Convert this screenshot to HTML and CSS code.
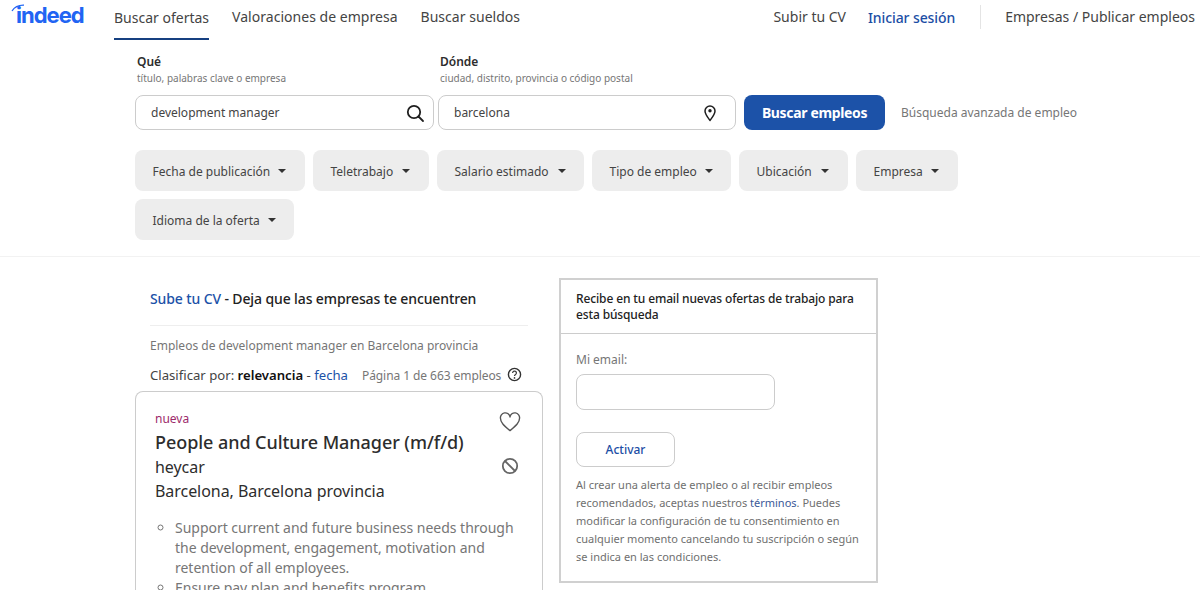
FILE: index.html
```html
<!DOCTYPE html>
<html lang="es">
<head>
<meta charset="utf-8">
<title>Empleos de development manager en Barcelona provincia</title>
<link rel="stylesheet" href="styles.css">
</head>
<body>
<header class="topbar">
  <a class="logo"><svg class="logo-arc" viewBox="0 0 14 8" width="14" height="8"><path d="M1 7C3.500 3 7.500 1 13 1.200" fill="none" stroke="#2164f3" stroke-width="1.300"/></svg><span>indeed</span></a>
  <nav class="main-nav">
    <a class="nav-item nav-active">Buscar ofertas</a>
    <a class="nav-item">Valoraciones de empresa</a>
    <a class="nav-item">Buscar sueldos</a>
  </nav>
  <nav class="user-nav">
    <a class="nav-item">Subir tu CV</a>
    <a class="nav-item nav-signin">Iniciar sesión</a>
    <span class="nav-divider"></span>
    <a class="nav-item">Empresas / Publicar empleos</a>
  </nav>
</header>

<section class="search">
  <form class="search-form">
    <div class="field field-what">
      <div class="field-label">Qué</div>
      <div class="field-hint">título, palabras clave o empresa</div>
      <div class="input-box"><span>development manager</span>
        <svg viewBox="0 0 20 20" width="20" height="20"><circle cx="9" cy="9" r="6.200" fill="none" stroke="#1f1f1f" stroke-width="1.800"/><path d="M13.500 13.500L18 18" stroke="#1f1f1f" stroke-width="1.800" stroke-linecap="round"/></svg>
      </div>
    </div>
    <div class="field field-where">
      <div class="field-label">Dónde</div>
      <div class="field-hint">ciudad, distrito, provincia o código postal</div>
      <div class="input-box"><span>barcelona</span>
        <svg class="pin" viewBox="0 0 14 18" width="14" height="18"><path d="M7 16.500C4 12.500 2 10 2 7a5 5 0 0 1 10 0c0 3-2 5.500-5 9.500z" fill="none" stroke="#1f1f1f" stroke-width="1.500" stroke-linejoin="round"/><circle cx="7" cy="6.800" r="1.700" fill="#1f1f1f"/></svg>
      </div>
    </div>
    <a class="search-btn">Buscar empleos</a>
    <a class="advanced">Búsqueda avanzada de empleo</a>
  </form>
  <div class="filters">
    <a class="chip chip-date">Fecha de publicación<i class="caret"></i></a>
    <a class="chip chip-remote">Teletrabajo<i class="caret"></i></a>
    <a class="chip chip-salary">Salario estimado<i class="caret"></i></a>
    <a class="chip chip-type">Tipo de empleo<i class="caret"></i></a>
    <a class="chip chip-loc">Ubicación<i class="caret"></i></a>
    <a class="chip chip-company">Empresa<i class="caret"></i></a>
    <a class="chip chip-lang">Idioma de la oferta<i class="caret"></i></a>
  </div>
</section>

<main class="results">
  <div class="results-col">
    <div class="col-inner">
      <div class="upload"><a class="link">Sube tu CV</a> - Deja que las empresas te encuentren</div>
      <h1 class="jobs-title">Empleos de development manager en Barcelona provincia</h1>
      <div class="sort-row">
        <span class="sort">Clasificar por: <b>relevancia</b> - <a class="link">fecha</a></span>
        <span class="count">Página 1 de 663 empleos</span>
        <svg class="help" viewBox="0 0 16 16" width="15" height="15"><circle cx="8" cy="8" r="6.500" fill="none" stroke="#333" stroke-width="1.500"/><path d="M6 6.300a2 2 0 1 1 3.100 1.700C8.300 8.500 8 8.900 8 9.700" fill="none" stroke="#333" stroke-width="1.300"/><circle cx="8" cy="11.600" r=".9" fill="#333"/></svg>
      </div>
    </div>
    <article class="job-card">
      <div class="job-actions">
        <svg viewBox="0 0 24 22" width="22" height="20"><path d="M12 20.500C5 14.500 1.500 11.500 1.500 7A5.300 5.300 0 0 1 12 5.500 5.300 5.300 0 0 1 22.500 7C22.500 11.500 19 14.500 12 20.500z" fill="none" stroke="#555" stroke-width="1.500" stroke-linejoin="round"/></svg>
        <svg viewBox="0 0 18 18" width="18" height="18"><circle cx="9" cy="9" r="7.200" fill="none" stroke="#666" stroke-width="1.800"/><path d="M4 4l10 10" stroke="#666" stroke-width="1.800"/></svg>
      </div>
      <div class="job-new">nueva</div>
      <h2 class="job-title">People and Culture Manager (m/f/d)</h2>
      <div class="job-meta">heycar</div>
      <div class="job-meta">Barcelona, Barcelona provincia</div>
      <ul class="job-desc">
        <li>Support current and future business needs through the development, engagement, motivation and retention of all employees.</li>
        <li>Ensure pay plan and benefits program</li>
      </ul>
    </article>
  </div>
  <aside class="alert-box">
    <div class="alert-head">Recibe en tu email nuevas ofertas de trabajo para esta búsqueda</div>
    <div class="alert-body">
      <div class="alert-label">Mi email:</div>
      <div class="alert-input"></div>
      <a class="alert-btn">Activar</a>
      <p class="alert-legal">Al crear una alerta de empleo o al recibir empleos recomendados, aceptas nuestros <a class="legal-link">términos</a>. Puedes modificar la configuración de tu consentimiento en cualquier momento cancelando tu suscripción o según se indica en las condiciones.</p>
    </div>
  </aside>
</main>
</body>
</html>
```
FILE: styles.css
```css
* { box-sizing: border-box; }
html, body { margin: 0; height: 590px; overflow: hidden; }
body { font-family: "Noto Sans", sans-serif; background: #fff; color: #2d2d2d; font-size: 14px; }
h1, h2, p, ul { margin: 0; padding: 0; font-weight: 400; }

.topbar { display: flex; height: 40px; padding-left: 16px; }
.logo { position: relative; width: 98px; font-family: "Inter", sans-serif; font-weight: 700; font-size: 22px; line-height: 30px; letter-spacing: -1px; color: #2164f3; }
.logo-arc { position: absolute; left: -5px; top: 4px; }
.main-nav { display: flex; gap: 23px; }
.main-nav .nav-item { letter-spacing: .03px; }
.nav-item { display: block; height: 40px; line-height: 34px; color: #444; font-size: 14px; white-space: nowrap; }
.nav-active { border-bottom: 2px solid #164081; line-height: 36px; }
.main-nav .nav-active { letter-spacing: 0; }
.user-nav { display: flex; margin-left: auto; padding-right: 5px; gap: 23px; }
.nav-signin { color: #1c4ea5; font-weight: 500; line-height: 35px; letter-spacing: -.1px; margin: 0 1px 0 -1px; }
.nav-divider { width: 1px; height: 24px; margin: 5px 1px 0; background: #e4e4e4; }

.search { padding: 13px 0 0 135px; height: 217px; border-bottom: 1px solid #f2f2f2; }
.search-form { display: flex; align-items: flex-end; }
.field { display: flex; flex-direction: column; margin-right: 4px; }
.field-what { width: 299px; }
.field-where { width: 298px; margin-right: 8px; }
.field-label { padding-left: 2px; font-size: 12px; font-weight: 600; line-height: 17px; color: #2d2d2d; }
.field-hint { padding-left: 2px; font-size: 10px; line-height: 14px; color: #767676; margin: 1px 0 10px; }
.input-box { display: flex; align-items: center; justify-content: space-between; height: 35px; padding: 0 8px 0 15px; border: 1px solid #ccc; border-radius: 8px; font-size: 12px; color: #444; }
.pin { margin-right: 10px; }
.search-btn { width: 141px; height: 35px; line-height: 35px; text-align: center; border-radius: 8px; background: #1c52a8; color: #fff; font-weight: 700; font-size: 14px; letter-spacing: -.35px; }
.advanced { margin-left: 16px; line-height: 35px; font-size: 12px; color: #767676; }

.filters { display: flex; flex-wrap: wrap; gap: 8px; margin-top: 20px; width: 860px; }
.chip { display: flex; align-items: center; justify-content: space-between; height: 41px; padding: 1px 19px 0 17.5px; background: #ededed; border-radius: 8px; font-size: 12px; color: #444; white-space: nowrap; }
.chip-date { width: 170px; }
.chip-remote { width: 116px; }
.chip-salary { width: 147px; padding-right: 18px; }
.chip-type { width: 139px; }
.chip-loc { width: 109px; }
.chip-company { width: 102px; }
.chip-lang { width: 159px; }
.caret { width: 0; height: 0; border: 4px solid transparent; border-top: 4px solid #333; border-bottom: 0; margin-left: 8px; }

.results { display: flex; align-items: flex-start; padding: 21px 0 0 135px; }
.results-col { width: 408px; }
.col-inner { padding: 0 15px; }
.upload { height: 48px; padding-top: 11px; line-height: 20px; font-size: 14px; font-weight: 500; letter-spacing: -.12px; color: #222; border-bottom: 1px solid #eee; width: 378px; }
.link { color: #1c52a8; }
.jobs-title { margin-top: 11px; font-size: 12px; line-height: 18px; color: #767676; }
.sort-row { display: flex; align-items: center; margin-top: 10px; height: 20px; }
.sort { font-size: 13.15px; color: #444; margin-right: 14px; }
.sort b { font-weight: 600; color: #111; }
.count { font-size: 12px; letter-spacing: -.07px; color: #767676; margin-right: 6px; }
.help { margin-top: -1px; }
.job-card { position: relative; height: 220px; margin-top: 6px; padding: 18px 19px 0; border: 1px solid #ccc; border-radius: 8px 8px 0 0; border-bottom: 0; overflow: hidden; }
.job-actions { position: absolute; top: 20px; right: 21px; display: flex; flex-direction: column; align-items: center; gap: 25px; }
.job-new { font-size: 12px; line-height: 17px; color: #9d2b6b; }
.job-title { font-size: 18px; line-height: 26px; font-weight: 500; letter-spacing: -.06px; color: #2d2d2d; margin-top: 2px; }
.job-meta { font-size: 16px; line-height: 24px; letter-spacing: -.05px; color: #2d2d2d; }
.job-desc { margin-top: 15px; padding-left: 20px; list-style: circle; font-size: 14px; line-height: 20px; letter-spacing: -.02px; color: #767676; }

.alert-box { width: 319px; height: 305px; margin-left: 16px; border: 2px solid #d0d0d0; }
.alert-head { height: 54px; padding: 11px 15px 0; font-size: 12px; line-height: 16px; font-weight: 500; letter-spacing: -.13px; color: #222; border-bottom: 1px solid #ccc; }
.alert-body { padding: 17px 15px 0; }
.alert-label { font-size: 12px; line-height: 18px; color: #767676; }
.alert-input { width: 199px; height: 36px; margin-top: 5px; border: 1px solid #ccc; border-radius: 8px; }
.alert-btn { display: block; width: 99px; height: 35px; margin-top: 22px; line-height: 33px; text-align: center; border: 1px solid #ccc; border-radius: 8px; font-size: 12px; font-weight: 500; color: #1c4ea5; }
.alert-legal { margin-top: 9px; font-size: 11px; line-height: 18px; color: #6f6f6f; }
.legal-link { color: #3b5998; }
```
